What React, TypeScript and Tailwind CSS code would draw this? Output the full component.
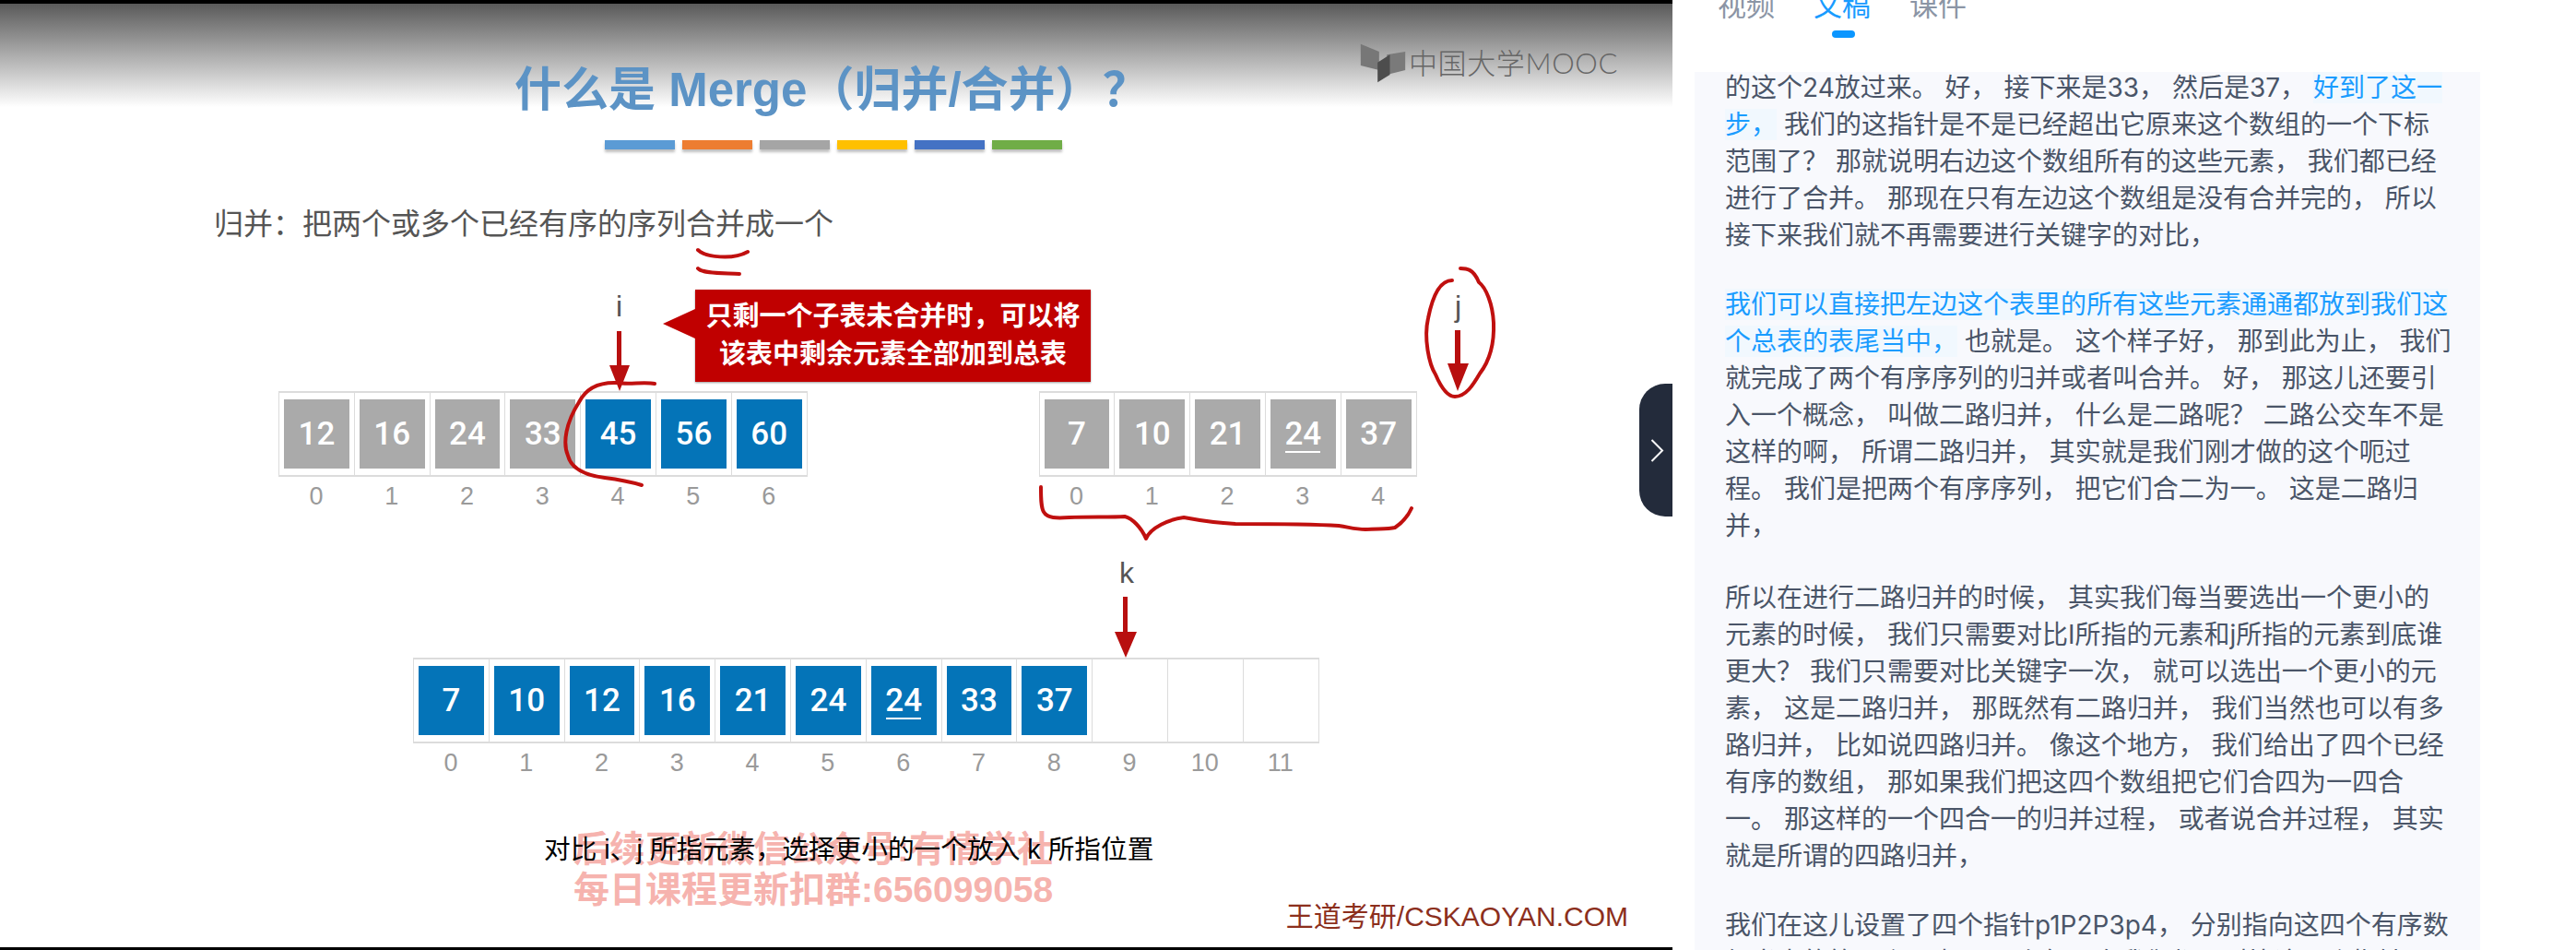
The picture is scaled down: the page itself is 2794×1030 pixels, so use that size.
const FONT = "font-['Liberation_Sans','Noto_Sans_CJK_SC',sans-serif]"

const barColors = ['bg-[#5b9bd5]', 'bg-[#ed7d31]', 'bg-[#a5a5a5]', 'bg-[#ffc000]', 'bg-[#4472c4]', 'bg-[#70ad47]']

type Cell = { value?: number; blue?: boolean; mark?: boolean }

function ArrayBlock({ cells }: { cells: Cell[] }) {
  return (
    <div className="w-fit">
      <div className="flex border-y-2 border-l border-[#dcdcdc] h-[93px]">
        {cells.map((c, i) => (
          <div key={i} className="w-[81.8px] h-full border-r border-[#dcdcdc] px-[5px] pt-[7px] pb-[7px]">
            {c.value !== undefined && (
              <div className={`h-full flex flex-col items-center justify-center text-white font-['Roboto',sans-serif] font-medium text-[35px] leading-none ${c.blue ? 'bg-[#0474b8]' : 'bg-[#aaaaaa]'}`}>
                <span>{c.value}</span>
                {c.mark && <span className="w-[38px] h-[2px] bg-white -mb-[3px] mt-[1px]" />}
              </div>
            )}
          </div>
        ))}
      </div>
      <div className="flex">
        {cells.map((_, i) => (
          <span key={i} className="w-[81.8px] text-center text-[27px] leading-[42px] text-[#9a9a9a]">{i}</span>
        ))}
      </div>
    </div>
  )
}

function Slide() {
  const left: Cell[] = [12, 16, 24, 33].map(v => ({ value: v })).concat([45, 56, 60].map(v => ({ value: v, blue: true })) as Cell[])
  const right: Cell[] = [{ value: 7 }, { value: 10 }, { value: 21 }, { value: 24, mark: true }, { value: 37 }]
  const total: Cell[] = [
    ...[7, 10, 12, 16, 21, 24].map(v => ({ value: v, blue: true })),
    { value: 24, blue: true, mark: true },
    { value: 33, blue: true },
    { value: 37, blue: true },
    {}, {}, {},
  ]

  return (
    <div className="relative w-[1814px] h-full shrink-0 flex flex-col bg-[linear-gradient(#5a5a5a_4px,#ffffff_116px)] bg-white">
      <div className="h-[4px] bg-black" />

      <div className="mt-[64px] pl-[558px] h-[60px] text-[51px] leading-[60px] font-semibold text-[#5c93c5] whitespace-nowrap">
        什么是 Merge（归并/合并）？
      </div>

      <div className="mt-[24px] pl-[656px] flex gap-[8px] h-[10px]">
        {barColors.map(c => (
          <div key={c} className={`w-[76px] ${c} shadow-[0_3px_3px_rgba(0,0,0,0.25)]`} />
        ))}
      </div>

      <div className="mt-[61px] pl-[232px] h-[40px] text-[32px] leading-[40px] text-[#555555] whitespace-nowrap">
        归并：把两个或多个已经有序的序列合并成一个
      </div>

      <div className="mt-[161px] pl-[302px] flex gap-[251px]">
        <ArrayBlock cells={left} />
        <ArrayBlock cells={right} />
      </div>

      <div className="mt-[154px] pl-[448px]">
        <ArrayBlock cells={total} />
      </div>

      <div className="relative mt-[51px] pl-[622px] text-[39px] leading-[44px] font-bold text-[#f6b3ae] whitespace-nowrap">
        <div>后续更新微信公众号:有情学社</div>
        <div>每日课程更新扣群:656099058</div>
        <div className="absolute left-[590px] top-[2px] text-[28.7px] leading-[40px] font-normal text-black">
          对比 i、j 所指元素，选择更小的一个放入 k 所指位置
        </div>
      </div>

      <div className="-mt-[7px] pr-[48px] text-right text-[30px] leading-[28px] text-[#8c2f1d]">王道考研/CSKAOYAN.COM</div>
      <div className="mt-auto h-[3px] bg-black" />

      {/* logo */}
      <div className="absolute left-[1474px] top-[46px] flex items-center gap-[2px]">
        <svg width="52" height="45" viewBox="40 45 155 135">
          <path d="M45 50 L105 75 L105 135 L45 120 Z" fill="#777777" />
          <path d="M130 85 L190 75 L190 135 L130 150 Z" fill="#7a7a7a" />
          <path d="M100 110 L140 85 L140 150 L100 175 Z" fill="#4d4d4d" />
        </svg>
        <span className="font-['Lato','Noto_Sans_CJK_SC',sans-serif] text-[31px] leading-none font-light text-[#666666] whitespace-nowrap tracking-[0.6px]">中国大学MOOC</span>
      </div>

      {/* pointer labels */}
      <span className="absolute left-[668px] top-[314px] text-[32px] leading-[36px] text-[#555555]">i</span>
      <span className="absolute left-[1578px] top-[314px] text-[32px] leading-[36px] text-[#555555]">j</span>
      <span className="absolute left-[1214px] top-[603px] text-[32px] leading-[36px] text-[#555555]">k</span>

      {/* callout */}
      <div className="absolute left-[754px] top-[314px] w-[429px] h-[100px] bg-[#c00000] flex flex-col items-center justify-center text-white text-[29px] leading-[41px] font-bold whitespace-nowrap shadow-[0_1px_2px_rgba(0,0,0,0.4)]">
        <div>只剩一个子表未合并时，可以将</div>
        <div>该表中剩余元素全部加到总表</div>
        <div className="absolute -left-[35px] top-[21px] w-0 h-0 border-y-[16px] border-y-transparent border-r-[35px] border-r-[#c00000]" />
      </div>

      {/* arrows and pen strokes drawn on the slide */}
      <svg className="absolute left-0 top-0 pointer-events-none" width="1814" height="1030" viewBox="0 0 1814 1030" fill="none">
        <g fill="#b80f0f">
          <path d="M669 359h5v37h9l-11 28l-11 -28h8z" />
          <path d="M1578 358h6v36h9l-12 30l-11 -30h8z" />
          <path d="M1218 647h5v38h10l-12 28l-12 -28h9z" />
        </g>
        <g stroke="#c0100f" strokeWidth="4" strokeLinecap="round" strokeLinejoin="round">
          <path d="M757 271C765 279 795 282 811 273" />
          <path d="M757 291C762 297 785 296 802 297" />
          <path d="M710 416C700 414 680 417 670 415C650 414 636 420 628 436C614 458 610 480 616 494C620 510 640 516 656 518C672 520 686 523 696 526" />
          <path d="M1575 304C1560 304 1553 325 1549 345C1544 367 1550 395 1557 406C1563 420 1570 430 1578 430C1590 430 1598 417 1605 405C1615 392 1621 375 1620 350C1619 330 1612 312 1604 306C1598 291 1590 291 1584 291" />
          <path d="M1129 528C1129 540 1129 550 1132 555C1136 562 1146 562 1160 561C1180 560 1205 561 1220 560C1228 562 1238 572 1243 584C1248 572 1268 563 1284 561C1300 564 1320 567 1340 568C1380 568 1420 568 1452 570C1465 572 1470 574 1481 574C1495 573 1505 574 1513 572C1522 566 1527 560 1531 551" />
        </g>
      </svg>

      {/* collapse handle */}
      <div className="absolute right-0 top-[416px] w-[36px] h-[144px] rounded-l-[28px] bg-[#232b3b] flex items-center pl-[12px]">
        <svg width="15" height="25" viewBox="0 0 15 25" fill="none" stroke="#ffffff" strokeWidth="2">
          <path d="M1.5 1L13 12.5L1.5 24" />
        </svg>
      </div>
    </div>
  )
}

type Seg = { t: string; hl?: boolean }

const paragraphs: Seg[][][] = [
  [
    [{ t: '的这个24放过来。 好， 接下来是33， 然后是37， ' }, { t: '好到了这一', hl: true }],
    [{ t: '步，', hl: true }, { t: ' 我们的这指针是不是已经超出它原来这个数组的一个下标' }],
    [{ t: '范围了？ 那就说明右边这个数组所有的这些元素， 我们都已经' }],
    [{ t: '进行了合并。 那现在只有左边这个数组是没有合并完的， 所以' }],
    [{ t: '接下来我们就不再需要进行关键字的对比，' }],
  ],
  [
    [{ t: '我们可以直接把左边这个表里的所有这些元素通通都放到我们这', hl: true }],
    [{ t: '个总表的表尾当中，', hl: true }, { t: ' 也就是。 这个样子好， 那到此为止， 我们' }],
    [{ t: '就完成了两个有序序列的归并或者叫合并。 好， 那这儿还要引' }],
    [{ t: '入一个概念， 叫做二路归并， 什么是二路呢？ 二路公交车不是' }],
    [{ t: '这样的啊， 所谓二路归并， 其实就是我们刚才做的这个呃过' }],
    [{ t: '程。 我们是把两个有序序列， 把它们合二为一。 这是二路归' }],
    [{ t: '并，' }],
  ],
  [
    [{ t: '所以在进行二路归并的时候， 其实我们每当要选出一个更小的' }],
    [{ t: '元素的时候， 我们只需要对比I所指的元素和j所指的元素到底谁' }],
    [{ t: '更大？ 我们只需要对比关键字一次， 就可以选出一个更小的元' }],
    [{ t: '素， 这是二路归并， 那既然有二路归并， 我们当然也可以有多' }],
    [{ t: '路归并， 比如说四路归并。 像这个地方， 我们给出了四个已经' }],
    [{ t: '有序的数组， 那如果我们把这四个数组把它们合四为一四合' }],
    [{ t: '一。 那这样的一个四合一的归并过程， 或者说合并过程， 其实' }],
    [{ t: '就是所谓的四路归并，' }],
  ],
  [
    [{ t: '我们在这儿设置了四个指针p1P2P3p4， 分别指向这四个有序数' }],
    [{ t: '组当中的第一个元素， 那么每一次我们都要对比这四个指针' }],
  ],
]

function Transcript() {
  return (
    <div className="flex-1 min-h-0 ml-[24px] w-[852px] bg-[#f8f9fd] pl-[33px] overflow-hidden">
      <div className="-mt-[3px] flex flex-col font-['Inter','Noto_Sans_CJK_SC',sans-serif] text-[28px] leading-[40px] text-[#4a5568]">
        {paragraphs.map((lines, i) => (
          <div key={i} className={i === 0 ? '' : i === 2 ? 'mt-[38px]' : 'mt-[35px]'}>
            {lines.map((segs, j) => (
              <div key={j} className="whitespace-nowrap">
                {segs.map((s, k) => (
                  <span key={k} className={s.hl ? 'text-[#1a9cff] bg-[#f1f8fe]' : ''}>{s.t}</span>
                ))}
              </div>
            ))}
          </div>
        ))}
      </div>
    </div>
  )
}

export default function App() {
  return (
    <div className={`w-[2794px] h-[1030px] overflow-hidden flex bg-white ${FONT}`}>
      <Slide />
      <div className="flex-1 h-full flex flex-col min-w-0">
        <div className="h-[78px] shrink-0 pl-[49px] flex gap-[42px] overflow-hidden text-[31px] leading-[40px]">
          <span className="-mt-[13px] h-[40px] text-[#8b95a5]">视频</span>
          <div className="relative -mt-[13px] text-[#1a9cff]">
            <span>文稿</span>
            <div className="absolute left-[20px] top-[46px] w-[25px] h-[8px] rounded-full bg-[#0b96ff]" />
          </div>
          <span className="-mt-[13px] h-[40px] text-[#8b95a5]">课件</span>
        </div>
        <Transcript />
      </div>
    </div>
  )
}
